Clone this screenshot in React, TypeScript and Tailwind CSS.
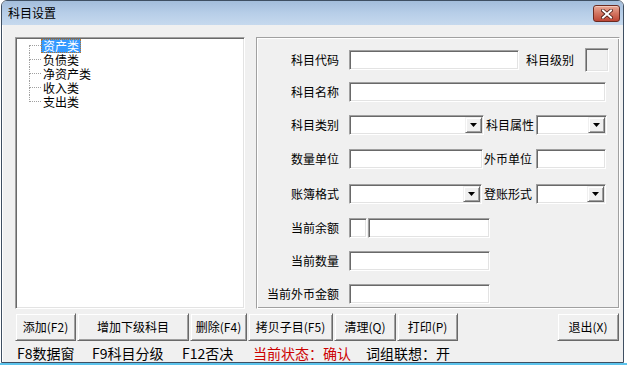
const sunken =
  "border border-t-[#a0a0a0] border-l-[#a0a0a0] border-b-white border-r-white shadow-[inset_1px_1px_0_#696969,inset_-1px_-1px_0_#e3e3e3]";
const raised =
  "border border-t-[#f0f0f0] border-l-[#f0f0f0] border-b-[#696969] border-r-[#696969] shadow-[inset_1px_1px_0_#ffffff,inset_-1px_-1px_0_#a0a0a0] bg-[#f0f0f0]";

function Field({ className }: { className: string }) {
  return <div className={`${sunken} bg-white h-[20px] shrink-0 ${className}`} />;
}

function Combo({ className }: { className: string }) {
  return (
    <div className={`${sunken} bg-white h-[20px] shrink-0 flex justify-end p-[1px] ${className}`}>
      <div className={`${raised} w-[17px] h-full flex items-center justify-center`}>
        <svg width="7" height="4" viewBox="0 0 7 4">
          <path d="M0 0h7L3.5 4z" fill="#000" />
        </svg>
      </div>
    </div>
  );
}

function Label({ text, className = "" }: { text: string; className?: string }) {
  return <div className={`text-[12px] leading-[12px] whitespace-nowrap shrink-0 ${className}`}>{text}</div>;
}

function LeftLabel({ text }: { text: string }) {
  return <div className="w-[83px] mr-[9px] pr-[1px] text-right text-[12px] leading-[12px] whitespace-nowrap shrink-0">{text}</div>;
}

const treeItems = ["资产类", "负债类", "净资产类", "收入类", "支出类"];

function Tree() {
  return (
    <div className={`${sunken} bg-white w-[230px] h-[272px] shrink-0 pt-[1px] pl-[13px]`}>
      {treeItems.map((t, i) => (
        <div key={t} className="flex items-center h-[14px]">
          <div className="w-[12px] h-[14px] flex flex-col shrink-0">
            <div
              className={`h-[7px] border-b border-dotted border-b-[#a0a0a0] ${i > 0 ? "border-l border-l-[#a0a0a0] border-dotted" : ""}`}
            />
            <div className={`h-[7px] ${i < treeItems.length - 1 ? "border-l border-dotted border-l-[#a0a0a0]" : ""}`} />
          </div>
          {i === 0 ? (
            <div className="h-[14px] bg-[#3399ff] text-white border border-dotted border-[#b8742c] px-[1px] text-[12px] leading-[12px]">
              {t}
            </div>
          ) : (
            <div className="h-[14px] px-[2px] text-[12px] leading-[14px] text-black">{t}</div>
          )}
        </div>
      ))}
    </div>
  );
}

function Panel() {
  return (
    <div className="w-[364px] h-[272px] shrink-0 border border-t-[#a0a0a0] border-l-[#a0a0a0] border-b-white border-r-white shadow-[inset_1px_1px_0_#ffffff,inset_-1px_-1px_0_#a0a0a0] flex flex-col">
      <div className="mt-[12px] h-[20px] flex items-center">
        <LeftLabel text="科目代码" />
        <Field className="w-[170px]" />
        <Label text="科目级别" className="ml-[7px]" />
        <div className={`${sunken} bg-[#f0f0f0] w-[24px] h-[24px] ml-[11px] shrink-0`} />
      </div>
      <div className="mt-[12px] h-[20px] flex items-center">
        <LeftLabel text="科目名称" />
        <Field className="w-[257px]" />
      </div>
      <div className="mt-[13px] h-[20px] flex items-center">
        <LeftLabel text="科目类别" />
        <Combo className="w-[135px]" />
        <Label text="科目属性" className="ml-[2px]" />
        <Combo className="w-[71px] ml-[2px]" />
      </div>
      <div className="mt-[14px] h-[20px] flex items-center">
        <LeftLabel text="数量单位" />
        <Field className="w-[134px]" />
        <Label text="外币单位" className="ml-[1px]" />
        <Field className="w-[70px] ml-[4px]" />
      </div>
      <div className="mt-[15px] h-[20px] flex items-center">
        <LeftLabel text="账簿格式" />
        <Combo className="w-[133px]" />
        <Label text="登账形式" className="ml-[2px]" />
        <Combo className="w-[70px] ml-[4px]" />
      </div>
      <div className="mt-[14px] h-[20px] flex items-center">
        <LeftLabel text="当前余额" />
        <Field className="w-[18px]" />
        <Field className="w-[122px] ml-[1px]" />
      </div>
      <div className="mt-[13px] h-[20px] flex items-center">
        <LeftLabel text="当前数量" />
        <Field className="w-[141px]" />
      </div>
      <div className="mt-[13px] h-[20px] flex items-center">
        <LeftLabel text="当前外币金额" />
        <Field className="w-[141px]" />
      </div>
    </div>
  );
}

function Btn({ text, className }: { text: string; className: string }) {
  return (
    <div className={`${raised} h-[28px] shrink-0 flex items-center justify-center text-[12px] leading-[12px] text-black ${className}`}>
      {text}
    </div>
  );
}

export default function App() {
  return (
    <div className="w-[627px] h-[366px] bg-white overflow-hidden font-['Noto_Sans_CJK_SC','Noto_Sans',sans-serif] text-black">
      <div className="ml-[1px] w-[623px] h-[363px] border border-[#3f4f62] rounded-t-[6px] flex flex-col overflow-hidden">
        <div className="h-[24px] shrink-0 flex items-center bg-linear-to-b from-[#a3bddb] via-[#b7cee8] to-[#c6d9ee]">
          <div className="pl-[6px] text-[12px] leading-[12px] text-black">科目设置</div>
          <div className="ml-auto mr-[3px] self-start mt-[4px] w-[27px] h-[17px] rounded-[3px] border border-[#6b2a20] bg-linear-to-b from-[#e9a897] via-[#d27460] to-[#bd4535] flex items-center justify-center shadow-[inset_0_1px_0_#f3c8bb]">
            <svg width="12" height="10" viewBox="0 0 12 10">
              <path d="M2 1.5l8 7M10 1.5l-8 7" stroke="#4a1a12" strokeWidth="3.6" strokeLinecap="square" />
              <path d="M2 1.5l8 7M10 1.5l-8 7" stroke="#ffffff" strokeWidth="2" strokeLinecap="square" />
            </svg>
          </div>
        </div>
        <div className="flex-1 bg-[#f0f0f0] border-l border-white flex flex-col pl-[12px] pt-[12px]">
          <div className="flex gap-[11px]">
            <Tree />
            <Panel />
          </div>
          <div className="mt-[4px] flex gap-[1px] pr-[4px]">
            <Btn text="添加(F2)" className="w-[61px]" />
            <Btn text="增加下级科目" className="w-[112px]" />
            <Btn text="删除(F4)" className="w-[57px]" />
            <Btn text="拷贝子目(F5)" className="w-[85px]" />
            <Btn text="清理(Q)" className="w-[62px]" />
            <Btn text="打印(P)" className="w-[61px]" />
            <Btn text="退出(X)" className="w-[62px] ml-auto" />
          </div>
          <div className="mt-[3px] h-[18px] flex items-center pl-[2px] text-[14px] leading-[14px] whitespace-nowrap">
            <span className="w-[75px] shrink-0">F8数据窗</span>
            <span className="w-[90px] shrink-0">F9科目分级</span>
            <span className="w-[71px] shrink-0">F12否决</span>
            <span className="w-[113px] shrink-0 text-[#cc0000]">当前状态：确认</span>
            <span>词组联想：开</span>
          </div>
        </div>
      </div>
      <div className="h-[2px] bg-[#5cc3ec]" />
    </div>
  );
}
